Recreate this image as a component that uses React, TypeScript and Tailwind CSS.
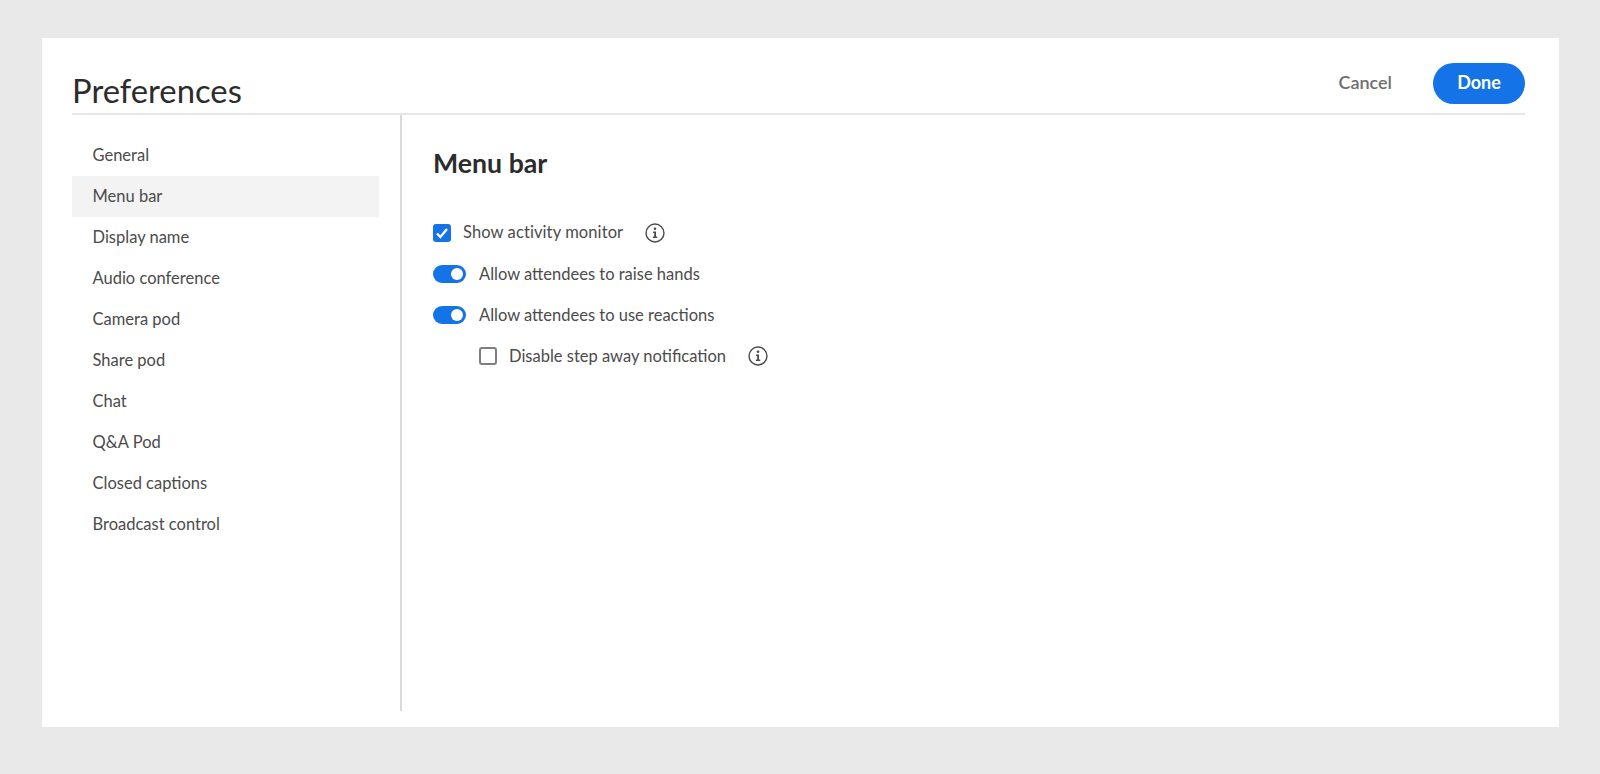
import React from "react";

const nav = ["General", "Menu bar", "Display name", "Audio conference", "Camera pod", "Share pod", "Chat", "Q&A Pod", "Closed captions", "Broadcast control"];

function Info() {
  return (
    <svg width="20" height="20" viewBox="0 0 20 20" fill="none" className="shrink-0">
      <circle cx="10" cy="10" r="9" stroke="#4b4b4b" strokeWidth="1.4" />
      <circle cx="10" cy="5.8" r="1.3" fill="#4b4b4b" />
      <path d="M8.1 8.5H11V13.6H12.2V15H7.9V13.6H9.2V9.9H8.1Z" fill="#4b4b4b" />
    </svg>
  );
}

function Toggle() {
  return (
    <span className="w-[33px] h-[18px] rounded-full bg-[#1473e6] flex items-center justify-end pr-[3px] shrink-0">
      <span className="w-[12px] h-[12px] rounded-full bg-white" />
    </span>
  );
}

export default function App() {
  return (
    <div className="w-[1600px] h-[774px] bg-[#e9e9e9] pt-[38px] pl-[42px] font-['Lato',sans-serif] overflow-hidden">
      <div className="w-[1517px] h-[689px] bg-white pl-[30px] pr-[34px] flex flex-col">
        <header className="h-[77px] shrink-0 border-b-2 border-[#e6e6e6] flex justify-between">
          <h1 className="text-[32.8px] leading-[46px] mt-[30px] text-[#2c2c2c]">Preferences</h1>
          <div className="flex items-start pt-[25px]">
            <button className="text-[18px] leading-[39px] font-semibold text-[#6e6e6e] mr-[41px]">Cancel</button>
            <button className="w-[92px] h-[41px] rounded-full bg-[#1473e6] text-white text-[18px] font-bold pb-[2px]">Done</button>
          </div>
        </header>
        <div className="flex h-[596px]">
          <nav className="w-[330px] shrink-0 border-r-2 border-[#dadada] pr-[21px] pt-[20px] text-[16.5px] text-[#4b4b4b]">
            {nav.map((n) => (
              <div key={n} className={`h-[41px] pl-[20.5px] flex items-center ${n === "Menu bar" ? "bg-[#f3f3f3]" : ""}`}>{n}</div>
            ))}
          </nav>
          <main className="pl-[31px] pt-[30px] text-[#4b4b4b] text-[16.5px]">
            <h2 className="text-[26.7px] leading-[36px] font-bold text-[#2c2c2c]">Menu bar</h2>
            <div className="mt-[31px] flex flex-col">
              <div className="h-[41px] flex items-center">
                <span className="w-[18px] h-[18px] rounded-[3px] bg-[#1473e6] flex items-center justify-center">
                  <svg width="14" height="14" viewBox="0 0 14 14" fill="none"><path d="M2 7.5L5.4 11L12 3" stroke="white" strokeWidth="2.4" /></svg>
                </span>
                <span className="ml-[12px] tracking-[0.1px]">Show activity monitor</span>
                <span className="ml-[22px]"><Info /></span>
              </div>
              <div className="h-[41px] flex items-center"><Toggle /><span className="ml-[13px] pt-[2px]">Allow attendees to raise hands</span></div>
              <div className="h-[41px] flex items-center"><Toggle /><span className="ml-[13px] pt-[2px]">Allow attendees to use reactions</span></div>
              <div className="h-[41px] flex items-center pl-[46px]">
                <span className="w-[18px] h-[18px] rounded-[3px] border-2 border-[#7f7f7f]" />
                <span className="ml-[12px] pt-[2px]">Disable step away notification</span>
                <span className="ml-[22px]"><Info /></span>
              </div>
            </div>
          </main>
        </div>
      </div>
    </div>
  );
}
